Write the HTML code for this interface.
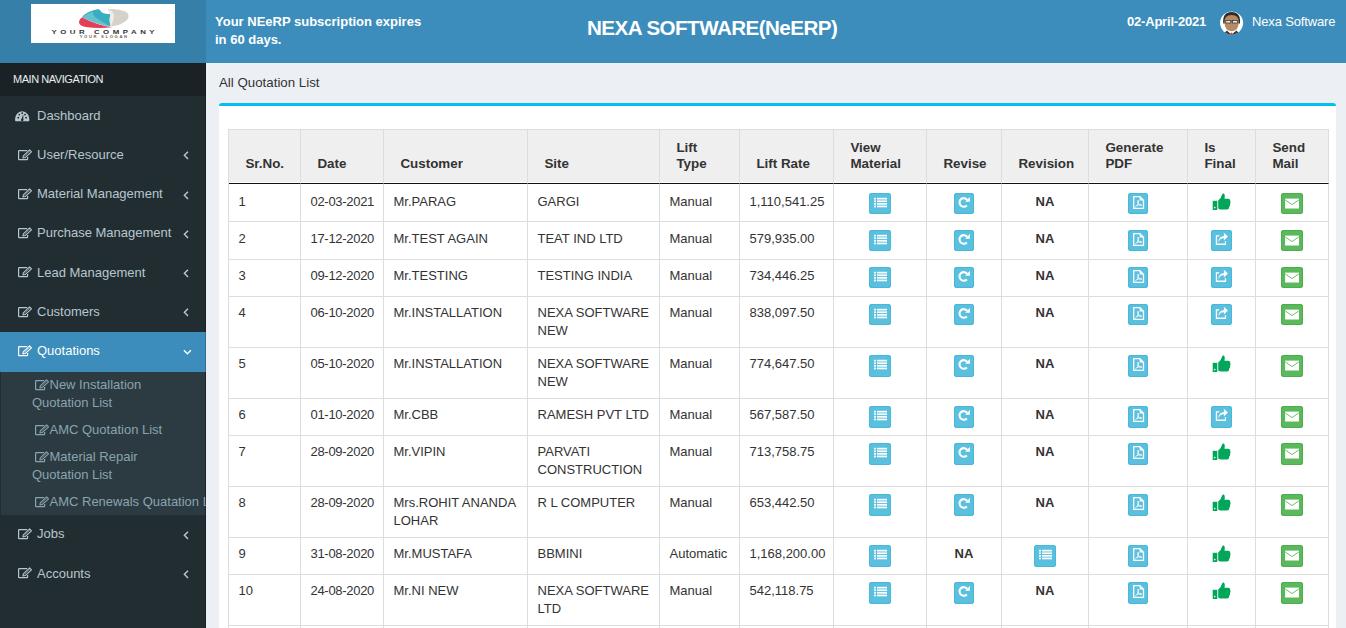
<!DOCTYPE html>
<html><head><meta charset="utf-8">
<style>
*{box-sizing:border-box;margin:0;padding:0}
html,body{width:1346px;height:628px;overflow:hidden;background:#ecf0f5;font-family:"Liberation Sans",sans-serif;font-size:13px;color:#333}
.hdr{position:absolute;left:0;top:0;width:1346px;height:63px;background:#3c8dbc}
.logo{position:absolute;left:0;top:0;width:206px;height:63px;background:#367fa9}
.logobox{position:absolute;left:31px;top:4px;width:144px;height:39px;background:#fff}
.sub{position:absolute;left:215px;top:12.6px;color:#fff;font-weight:bold;font-size:13px;line-height:18.2px}
.title{position:absolute;left:587px;top:15.5px;color:#fff;font-weight:bold;font-size:20.6px;line-height:24px;letter-spacing:-0.55px}
.date{position:absolute;left:1127px;top:12.6px;color:#fff;font-weight:bold;font-size:13px;line-height:18px;letter-spacing:-0.2px}
.uname{position:absolute;left:1252px;top:12.6px;color:#fff;font-size:13px;line-height:18px;letter-spacing:-0.15px}
.avatar{position:absolute;left:1216px;top:8px;width:32px;height:30px}
.side{position:absolute;left:0;top:63px;width:206px;height:565px;background:#222d32;overflow:hidden}
.side:after{content:"";position:absolute;right:0;top:0;width:1px;height:100%;background:rgba(0,0,0,0.2)}
.mnav{height:33px;background:#1a2226;color:#e8eef0;font-size:11px;letter-spacing:-0.45px;padding:9.2px 0 0 13px;line-height:15px}
.mi{position:relative;height:39.3px;color:#b8c7ce;font-size:13px;line-height:18px;padding-top:10.5px;padding-left:37px}
.mi svg.ic{position:absolute;left:16.5px;top:13.3px}
.ics{display:inline-block;vertical-align:-2.5px;margin-left:2px;margin-right:-0.5px}
.mi .chev{position:absolute;left:182.6px;top:15px}
.mi.act{background:#3c8dbc;color:#fff;height:40px}
.tree{background:#2c3b41;padding:4.5px 0 0 0;height:143px;margin:0 1px}
.tree .ti{padding-left:31px}
.ti{color:#8aa4af;font-size:13px;line-height:18px;padding:0 0 9px 32px;white-space:nowrap}
.content{position:absolute;left:206px;top:63px;width:1140px;height:565px}
.ctitle{position:absolute;left:13px;top:10.5px;font-size:13.3px;line-height:18px;color:#333}
.box{position:absolute;left:13px;top:40px;width:1117px;height:600px;background:#fff;border-top:3px solid #00c0ef;border-radius:3px}
table{position:absolute;left:9px;top:23px;border-collapse:separate;border-spacing:0;table-layout:fixed;border-left:1px solid #ddd;border-top:1px solid #ddd}
td,th{border-right:1px solid #ddd;border-bottom:1px solid #ddd;font-size:13px;line-height:18px;vertical-align:top;text-align:left;font-weight:normal;padding:0}
th{background:#efefef;font-weight:bold;font-size:13.4px;vertical-align:bottom;line-height:16.5px;padding:0 0 10.1px 16.4px;border-bottom:1px solid #111;box-shadow:inset 0 -1px 0 #fff;height:54px}
td{padding:6.5px 0 0 9.5px}
td.dt{letter-spacing:-0.3px}
td.c{text-align:center;padding-left:0;padding-top:7px}
td.na{font-weight:bold;padding-top:6.5px}
.r0 td{padding-top:8.5px}.r0 td.c{padding-top:9px}.r0 td.na{padding-top:8.5px}
.r1 td{padding-top:7.5px}.r1 td.c{padding-top:8px}.r1 td.na{padding-top:7.5px}
.btn{display:inline-block;width:22px;height:21px;border-radius:3px;vertical-align:top;position:relative}
.r4 .btn,.r5 .btn,.r6 .btn,.r7 .btn,.r8 .btn,.r9 .btn{height:22px}
.bi{background:#5bc0de;box-shadow:inset 0 0 0 1px #46b8da}
.bs{background:#5cb85c;box-shadow:inset 0 0 0 1px #4cae4c}
</style></head><body>
<div class="hdr"></div>
<div class="logo"><svg style="position:absolute;left:0;top:0" width="206" height="63" viewBox="0 0 206 63">
<rect x="31" y="4" width="144" height="39" fill="#fff"/>
<path d="M79 21.5 Q78.5 25.8 86 27 Q98 28.6 112.2 27.3 Q96 24.8 82 17.2 Q79.5 19 79 21.5 Z" fill="#e63e56"/>
<path d="M82 17.2 Q86 12 97 9.3 Q99.5 9 100 10 Q101 13 106 13.8 Q109.5 14.3 110.2 14 Q109 20 110.3 26.6 Q97 24.5 82 17.2 Z" fill="#38afc1"/>
<path d="M82.5 17.5 Q87 13.5 93 11.5 Q92 15.5 98 19 Q103 22.5 110.3 26.5 Q96 24.5 82.5 17.5 Z" fill="#8fd0da" opacity="0.55"/>
<path d="M107.5 9.2 Q118 8.2 125.5 11.5 Q131 15 127 20 Q121 25.5 110.3 26.6 Q109 20 110.2 14 Q110 11 107.5 9.2 Z" fill="#d5d2cc"/>
<path d="M108.5 9.5 Q113.5 11 114 15.5 Q113.8 21.5 110.6 26.4 Q109.2 20 110.2 14 Q110 11 108.5 9.5 Z" fill="#f1ede5"/>
<text transform="scale(1.4 1)" x="36.8" y="34.3" font-family="Liberation Sans" font-size="5.6" font-weight="bold" fill="#333" textLength="73.6" lengthAdjust="spacing">YOUR COMPANY</text>
<text transform="scale(1.4 1)" x="56.9" y="38.3" font-family="Liberation Sans" font-size="3" font-weight="bold" fill="#666" textLength="33.9" lengthAdjust="spacing">YOUR SLOGAN</text>
</svg></div>
<div class="sub">Your NEeRP subscription expires<br>in 60 days.</div>
<div class="title">NEXA SOFTWARE(NeERP)</div>
<div class="date">02-April-2021</div>
<div class="avatar"><svg width="32" height="30" viewBox="0 0 32 30">
<defs><clipPath id="avc"><circle cx="15.6" cy="15" r="11.5"/></clipPath></defs>
<circle cx="15.6" cy="15" r="11.5" fill="#fff"/>
<g clip-path="url(#avc)">
<path d="M6 27 L11 22.5 L15.6 26 L20.2 22.5 L25.5 27 V30 H6 Z" fill="#3b3b3b"/>
<path d="M11.6 23 L15.6 26.5 L19.6 23 Z" fill="#fff"/>
<path d="M15 24.8 H16.3 L16.8 27.5 H14.5 Z" fill="#e3191c"/>
</g>
<path d="M7.2 15.5 Q6.6 7.5 10.5 5.3 Q15.6 2.8 20.7 5.3 Q24.6 7.5 24 15.5 Z" fill="#2e2e2e"/>
<path d="M8.4 14 Q8.4 7.2 15.6 7 Q22.8 7.2 22.8 14 Q22.8 19 20.5 21.5 Q18 23.2 15.6 23.2 Q13.2 23.2 10.7 21.5 Q8.4 19 8.4 14 Z" fill="#b68b63"/>
<rect x="9.8" y="12.6" width="5" height="2.4" fill="#e6e6e6" stroke="#333" stroke-width="0.7"/>
<rect x="16.4" y="12.6" width="5" height="2.4" fill="#e6e6e6" stroke="#333" stroke-width="0.7"/>
<path d="M14.8 13.4 H16.4" stroke="#333" stroke-width="0.7"/>
</svg></div>
<div class="uname">Nexa Software</div>

<div class="side">
  <div class="mnav">MAIN NAVIGATION</div>
  <div class="mi"><svg class="ic" style="left:15px;top:14.5px" width="15" height="11" viewBox="0 0 15 11"><path d="M0.3 10.3 Q-0.6 6 1.8 3 Q4 0.3 7.2 0.3 Q10.4 0.3 12.6 3 Q15 6 14.1 10.3 Z" fill="currentColor"/><g fill="#222d32"><circle cx="3.3" cy="6.7" r="0.9"/><circle cx="4.4" cy="3.6" r="0.9"/><circle cx="7.2" cy="2.2" r="0.9"/><circle cx="10" cy="3.6" r="0.9"/><circle cx="11.1" cy="6.7" r="0.9"/><path d="M6.3 8.8 L8 3.8 L8.3 4 L8.3 9 Z"/><circle cx="7.2" cy="8.9" r="1.2"/></g></svg>Dashboard</div>
  <div class="mi"><svg class="ic" width="16" height="13" viewBox="0 0 16 13"><path d="M10.2 1.6 H2.2 Q1.6 1.6 1.6 2.2 V10 Q1.6 10.6 2.2 10.6 H10 Q10.6 10.6 10.6 10 V8" fill="none" stroke="currentColor" stroke-width="1.2"/><path d="M5.9 8.9 L6.3 6.8 L12.6 0.9 L14.5 2.8 L8.2 8.6 Z" fill="none" stroke="currentColor" stroke-width="1.05" stroke-linejoin="round"/><path d="M7.2 7.5 L13.3 1.9" stroke="currentColor" stroke-width="0.7" opacity="0.7"/></svg>User/Resource<svg class="chev" width="8" height="10" viewBox="0 0 8 10"><path d="M5.0 1.7 L1.4 5.3 L5.0 8.9" fill="none" stroke="currentColor" stroke-width="1.45"/></svg></div>
  <div class="mi"><svg class="ic" width="16" height="13" viewBox="0 0 16 13"><path d="M10.2 1.6 H2.2 Q1.6 1.6 1.6 2.2 V10 Q1.6 10.6 2.2 10.6 H10 Q10.6 10.6 10.6 10 V8" fill="none" stroke="currentColor" stroke-width="1.2"/><path d="M5.9 8.9 L6.3 6.8 L12.6 0.9 L14.5 2.8 L8.2 8.6 Z" fill="none" stroke="currentColor" stroke-width="1.05" stroke-linejoin="round"/><path d="M7.2 7.5 L13.3 1.9" stroke="currentColor" stroke-width="0.7" opacity="0.7"/></svg>Material Management<svg class="chev" width="8" height="10" viewBox="0 0 8 10"><path d="M5.0 1.7 L1.4 5.3 L5.0 8.9" fill="none" stroke="currentColor" stroke-width="1.45"/></svg></div>
  <div class="mi"><svg class="ic" width="16" height="13" viewBox="0 0 16 13"><path d="M10.2 1.6 H2.2 Q1.6 1.6 1.6 2.2 V10 Q1.6 10.6 2.2 10.6 H10 Q10.6 10.6 10.6 10 V8" fill="none" stroke="currentColor" stroke-width="1.2"/><path d="M5.9 8.9 L6.3 6.8 L12.6 0.9 L14.5 2.8 L8.2 8.6 Z" fill="none" stroke="currentColor" stroke-width="1.05" stroke-linejoin="round"/><path d="M7.2 7.5 L13.3 1.9" stroke="currentColor" stroke-width="0.7" opacity="0.7"/></svg>Purchase Management<svg class="chev" width="8" height="10" viewBox="0 0 8 10"><path d="M5.0 1.7 L1.4 5.3 L5.0 8.9" fill="none" stroke="currentColor" stroke-width="1.45"/></svg></div>
  <div class="mi"><svg class="ic" width="16" height="13" viewBox="0 0 16 13"><path d="M10.2 1.6 H2.2 Q1.6 1.6 1.6 2.2 V10 Q1.6 10.6 2.2 10.6 H10 Q10.6 10.6 10.6 10 V8" fill="none" stroke="currentColor" stroke-width="1.2"/><path d="M5.9 8.9 L6.3 6.8 L12.6 0.9 L14.5 2.8 L8.2 8.6 Z" fill="none" stroke="currentColor" stroke-width="1.05" stroke-linejoin="round"/><path d="M7.2 7.5 L13.3 1.9" stroke="currentColor" stroke-width="0.7" opacity="0.7"/></svg>Lead Management<svg class="chev" width="8" height="10" viewBox="0 0 8 10"><path d="M5.0 1.7 L1.4 5.3 L5.0 8.9" fill="none" stroke="currentColor" stroke-width="1.45"/></svg></div>
  <div class="mi"><svg class="ic" width="16" height="13" viewBox="0 0 16 13"><path d="M10.2 1.6 H2.2 Q1.6 1.6 1.6 2.2 V10 Q1.6 10.6 2.2 10.6 H10 Q10.6 10.6 10.6 10 V8" fill="none" stroke="currentColor" stroke-width="1.2"/><path d="M5.9 8.9 L6.3 6.8 L12.6 0.9 L14.5 2.8 L8.2 8.6 Z" fill="none" stroke="currentColor" stroke-width="1.05" stroke-linejoin="round"/><path d="M7.2 7.5 L13.3 1.9" stroke="currentColor" stroke-width="0.7" opacity="0.7"/></svg>Customers<svg class="chev" width="8" height="10" viewBox="0 0 8 10"><path d="M5.0 1.7 L1.4 5.3 L5.0 8.9" fill="none" stroke="currentColor" stroke-width="1.45"/></svg></div>
  <div class="mi act"><svg class="ic" width="16" height="13" viewBox="0 0 16 13"><path d="M10.2 1.6 H2.2 Q1.6 1.6 1.6 2.2 V10 Q1.6 10.6 2.2 10.6 H10 Q10.6 10.6 10.6 10 V8" fill="none" stroke="currentColor" stroke-width="1.2"/><path d="M5.9 8.9 L6.3 6.8 L12.6 0.9 L14.5 2.8 L8.2 8.6 Z" fill="none" stroke="currentColor" stroke-width="1.05" stroke-linejoin="round"/><path d="M7.2 7.5 L13.3 1.9" stroke="currentColor" stroke-width="0.7" opacity="0.7"/></svg>Quotations<svg class="chev" style="left:181.5px;top:16px" width="11" height="8" viewBox="0 0 11 8"><path d="M1.9 2.3 L5.4 5.8 L8.9 2.3" fill="none" stroke="currentColor" stroke-width="1.45"/></svg></div>
  <div class="tree">
    <div class="ti"><svg class="ics" width="16" height="13" viewBox="0 0 16 13"><path d="M10.2 1.6 H2.2 Q1.6 1.6 1.6 2.2 V10 Q1.6 10.6 2.2 10.6 H10 Q10.6 10.6 10.6 10 V8" fill="none" stroke="currentColor" stroke-width="1.2"/><path d="M5.9 8.9 L6.3 6.8 L12.6 0.9 L14.5 2.8 L8.2 8.6 Z" fill="none" stroke="currentColor" stroke-width="1.05" stroke-linejoin="round"/><path d="M7.2 7.5 L13.3 1.9" stroke="currentColor" stroke-width="0.7" opacity="0.7"/></svg>New Installation<br>Quotation List</div>
    <div class="ti"><svg class="ics" width="16" height="13" viewBox="0 0 16 13"><path d="M10.2 1.6 H2.2 Q1.6 1.6 1.6 2.2 V10 Q1.6 10.6 2.2 10.6 H10 Q10.6 10.6 10.6 10 V8" fill="none" stroke="currentColor" stroke-width="1.2"/><path d="M5.9 8.9 L6.3 6.8 L12.6 0.9 L14.5 2.8 L8.2 8.6 Z" fill="none" stroke="currentColor" stroke-width="1.05" stroke-linejoin="round"/><path d="M7.2 7.5 L13.3 1.9" stroke="currentColor" stroke-width="0.7" opacity="0.7"/></svg>AMC Quotation List</div>
    <div class="ti"><svg class="ics" width="16" height="13" viewBox="0 0 16 13"><path d="M10.2 1.6 H2.2 Q1.6 1.6 1.6 2.2 V10 Q1.6 10.6 2.2 10.6 H10 Q10.6 10.6 10.6 10 V8" fill="none" stroke="currentColor" stroke-width="1.2"/><path d="M5.9 8.9 L6.3 6.8 L12.6 0.9 L14.5 2.8 L8.2 8.6 Z" fill="none" stroke="currentColor" stroke-width="1.05" stroke-linejoin="round"/><path d="M7.2 7.5 L13.3 1.9" stroke="currentColor" stroke-width="0.7" opacity="0.7"/></svg>Material Repair<br>Quotation List</div>
    <div class="ti"><svg class="ics" width="16" height="13" viewBox="0 0 16 13"><path d="M10.2 1.6 H2.2 Q1.6 1.6 1.6 2.2 V10 Q1.6 10.6 2.2 10.6 H10 Q10.6 10.6 10.6 10 V8" fill="none" stroke="currentColor" stroke-width="1.2"/><path d="M5.9 8.9 L6.3 6.8 L12.6 0.9 L14.5 2.8 L8.2 8.6 Z" fill="none" stroke="currentColor" stroke-width="1.05" stroke-linejoin="round"/><path d="M7.2 7.5 L13.3 1.9" stroke="currentColor" stroke-width="0.7" opacity="0.7"/></svg>AMC Renewals Quatation List</div>
  </div>
  <div class="mi"><svg class="ic" width="16" height="13" viewBox="0 0 16 13"><path d="M10.2 1.6 H2.2 Q1.6 1.6 1.6 2.2 V10 Q1.6 10.6 2.2 10.6 H10 Q10.6 10.6 10.6 10 V8" fill="none" stroke="currentColor" stroke-width="1.2"/><path d="M5.9 8.9 L6.3 6.8 L12.6 0.9 L14.5 2.8 L8.2 8.6 Z" fill="none" stroke="currentColor" stroke-width="1.05" stroke-linejoin="round"/><path d="M7.2 7.5 L13.3 1.9" stroke="currentColor" stroke-width="0.7" opacity="0.7"/></svg>Jobs<svg class="chev" width="8" height="10" viewBox="0 0 8 10"><path d="M5.0 1.7 L1.4 5.3 L5.0 8.9" fill="none" stroke="currentColor" stroke-width="1.45"/></svg></div>
  <div class="mi"><svg class="ic" width="16" height="13" viewBox="0 0 16 13"><path d="M10.2 1.6 H2.2 Q1.6 1.6 1.6 2.2 V10 Q1.6 10.6 2.2 10.6 H10 Q10.6 10.6 10.6 10 V8" fill="none" stroke="currentColor" stroke-width="1.2"/><path d="M5.9 8.9 L6.3 6.8 L12.6 0.9 L14.5 2.8 L8.2 8.6 Z" fill="none" stroke="currentColor" stroke-width="1.05" stroke-linejoin="round"/><path d="M7.2 7.5 L13.3 1.9" stroke="currentColor" stroke-width="0.7" opacity="0.7"/></svg>Accounts<svg class="chev" width="8" height="10" viewBox="0 0 8 10"><path d="M5.0 1.7 L1.4 5.3 L5.0 8.9" fill="none" stroke="currentColor" stroke-width="1.45"/></svg></div>
</div>

<div class="content">
  <div class="ctitle">All Quotation List</div>
  <div class="box">
<!--TBL--><table><colgroup><col style="width:72px"><col style="width:83px"><col style="width:144px"><col style="width:132px"><col style="width:80px"><col style="width:94px"><col style="width:93px"><col style="width:75px"><col style="width:87px"><col style="width:99px"><col style="width:68px"><col style="width:73px"></colgroup>
<tr class="hr"><th>Sr.No.</th><th>Date</th><th>Customer</th><th>Site</th><th>Lift<br>Type</th><th>Lift Rate</th><th>View<br>Material</th><th>Revise</th><th>Revision</th><th>Generate<br>PDF</th><th>Is<br>Final</th><th>Send<br>Mail</th></tr>
<tr class="r0" style="height:38px"><td>1</td><td class="dt">02-03-2021</td><td>Mr.PARAG</td><td>GARGI</td><td>Manual</td><td>1,110,541.25</td><td class="c"><span class="btn bi" style="width:22px"><svg width="22" height="21" viewBox="0 0 22 21"><g fill="#fff"><rect x="5" y="4.8" width="2" height="1.7"/><rect x="8" y="4.8" width="10" height="1.7"/><rect x="5" y="7.4" width="2" height="1.7"/><rect x="8" y="7.4" width="10" height="1.7"/><rect x="5" y="10" width="2" height="1.7"/><rect x="8" y="10" width="10" height="1.7"/><rect x="5" y="12.6" width="2" height="1.7"/><rect x="8" y="12.6" width="10" height="1.7"/></g></svg></span></td><td class="c"><span class="btn bi" style="width:20px"><svg width="20" height="21" viewBox="0 0 20 21"><path d="M13.19 6.80 A4.3 4.3 0 1 0 12.84 12.49" fill="none" stroke="#fff" stroke-width="2.1"/><path d="M15.9 3.9 V8.7 H11.1 Z" fill="#fff"/></svg></span></td><td class="c na">NA</td><td class="c"><span class="btn bi" style="width:20px"><svg width="20" height="21" viewBox="0 0 20 21"><path d="M5.7 3.7 H11.9 L15.5 7.3 V15.4 H5.7 Z" fill="none" stroke="#fff" stroke-width="1.3"/><path d="M11.6 3.6 L15.6 7.6 H11.6 Z" fill="#fff"/><path d="M7.2 14.2 Q8.3 13.8 9.6 11.4 Q10.5 9.5 10.3 7.6 Q10.2 6.8 9.9 7.5 Q9.6 9.2 10.7 11 Q11.5 12.2 13.8 12.6 M9 12.4 Q11 11.7 13.5 11.6" fill="none" stroke="#fff" stroke-width="0.85"/></svg></span></td><td class="c"><svg width="20" height="18" viewBox="0 0 20 18" style="vertical-align:top"><path d="M0.7 7.8 H5.3 V17 H0.7 Z" fill="#00a65a"/><circle cx="2.8" cy="14.6" r="0.8" fill="#fff"/><path d="M6.2 7.6 Q9.3 5.2 10.1 1.6 Q10.6 0.2 11.8 0.6 Q13.3 1.4 12.5 5.8 H16.5 Q18.6 6.1 18.3 8.2 Q19 9.8 18 11.1 Q18.6 12.8 17.2 13.8 Q17.5 15.8 15.5 16.6 H9 Q7.3 16.6 6.2 15.6 Z" fill="#00a65a"/></svg></td><td class="c"><span class="btn bs" style="width:22px"><svg width="22" height="21" viewBox="0 0 22 21"><rect x="4.1" y="5.6" width="13.9" height="9.9" fill="#fff"/><path d="M4.3 6.9 L11 11.6 L17.8 6.9" fill="none" stroke="#5cb85c" stroke-width="0.9"/></svg></span></td></tr>
<tr class="r1" style="height:38px"><td>2</td><td class="dt">17-12-2020</td><td>Mr.TEST AGAIN</td><td>TEAT IND LTD</td><td>Manual</td><td>579,935.00</td><td class="c"><span class="btn bi" style="width:22px"><svg width="22" height="21" viewBox="0 0 22 21"><g fill="#fff"><rect x="5" y="4.8" width="2" height="1.7"/><rect x="8" y="4.8" width="10" height="1.7"/><rect x="5" y="7.4" width="2" height="1.7"/><rect x="8" y="7.4" width="10" height="1.7"/><rect x="5" y="10" width="2" height="1.7"/><rect x="8" y="10" width="10" height="1.7"/><rect x="5" y="12.6" width="2" height="1.7"/><rect x="8" y="12.6" width="10" height="1.7"/></g></svg></span></td><td class="c"><span class="btn bi" style="width:20px"><svg width="20" height="21" viewBox="0 0 20 21"><path d="M13.19 6.80 A4.3 4.3 0 1 0 12.84 12.49" fill="none" stroke="#fff" stroke-width="2.1"/><path d="M15.9 3.9 V8.7 H11.1 Z" fill="#fff"/></svg></span></td><td class="c na">NA</td><td class="c"><span class="btn bi" style="width:20px"><svg width="20" height="21" viewBox="0 0 20 21"><path d="M5.7 3.7 H11.9 L15.5 7.3 V15.4 H5.7 Z" fill="none" stroke="#fff" stroke-width="1.3"/><path d="M11.6 3.6 L15.6 7.6 H11.6 Z" fill="#fff"/><path d="M7.2 14.2 Q8.3 13.8 9.6 11.4 Q10.5 9.5 10.3 7.6 Q10.2 6.8 9.9 7.5 Q9.6 9.2 10.7 11 Q11.5 12.2 13.8 12.6 M9 12.4 Q11 11.7 13.5 11.6" fill="none" stroke="#fff" stroke-width="0.85"/></svg></span></td><td class="c"><span class="btn bi" style="width:21px"><svg width="21" height="21" viewBox="0 0 21 21"><path d="M8.3 5.95 H5.45 V14.25 H14.45 V11.2" fill="none" stroke="#fff" stroke-width="1.3"/><path d="M7.6 12.8 Q7.2 9.5 9.2 7.6 Q10.6 6.3 12.9 6.3 V2.8 L16.9 6.6 L12.9 10.4 V8.3 Q10.8 8.2 9.6 9.1 Q8.2 10.2 7.6 12.8 Z" fill="#fff"/></svg></span></td><td class="c"><span class="btn bs" style="width:22px"><svg width="22" height="21" viewBox="0 0 22 21"><rect x="4.1" y="5.6" width="13.9" height="9.9" fill="#fff"/><path d="M4.3 6.9 L11 11.6 L17.8 6.9" fill="none" stroke="#5cb85c" stroke-width="0.9"/></svg></span></td></tr>
<tr class="r2" style="height:37px"><td>3</td><td class="dt">09-12-2020</td><td>Mr.TESTING</td><td>TESTING INDIA</td><td>Manual</td><td>734,446.25</td><td class="c"><span class="btn bi" style="width:22px"><svg width="22" height="21" viewBox="0 0 22 21"><g fill="#fff"><rect x="5" y="4.8" width="2" height="1.7"/><rect x="8" y="4.8" width="10" height="1.7"/><rect x="5" y="7.4" width="2" height="1.7"/><rect x="8" y="7.4" width="10" height="1.7"/><rect x="5" y="10" width="2" height="1.7"/><rect x="8" y="10" width="10" height="1.7"/><rect x="5" y="12.6" width="2" height="1.7"/><rect x="8" y="12.6" width="10" height="1.7"/></g></svg></span></td><td class="c"><span class="btn bi" style="width:20px"><svg width="20" height="21" viewBox="0 0 20 21"><path d="M13.19 6.80 A4.3 4.3 0 1 0 12.84 12.49" fill="none" stroke="#fff" stroke-width="2.1"/><path d="M15.9 3.9 V8.7 H11.1 Z" fill="#fff"/></svg></span></td><td class="c na">NA</td><td class="c"><span class="btn bi" style="width:20px"><svg width="20" height="21" viewBox="0 0 20 21"><path d="M5.7 3.7 H11.9 L15.5 7.3 V15.4 H5.7 Z" fill="none" stroke="#fff" stroke-width="1.3"/><path d="M11.6 3.6 L15.6 7.6 H11.6 Z" fill="#fff"/><path d="M7.2 14.2 Q8.3 13.8 9.6 11.4 Q10.5 9.5 10.3 7.6 Q10.2 6.8 9.9 7.5 Q9.6 9.2 10.7 11 Q11.5 12.2 13.8 12.6 M9 12.4 Q11 11.7 13.5 11.6" fill="none" stroke="#fff" stroke-width="0.85"/></svg></span></td><td class="c"><span class="btn bi" style="width:21px"><svg width="21" height="21" viewBox="0 0 21 21"><path d="M8.3 5.95 H5.45 V14.25 H14.45 V11.2" fill="none" stroke="#fff" stroke-width="1.3"/><path d="M7.6 12.8 Q7.2 9.5 9.2 7.6 Q10.6 6.3 12.9 6.3 V2.8 L16.9 6.6 L12.9 10.4 V8.3 Q10.8 8.2 9.6 9.1 Q8.2 10.2 7.6 12.8 Z" fill="#fff"/></svg></span></td><td class="c"><span class="btn bs" style="width:22px"><svg width="22" height="21" viewBox="0 0 22 21"><rect x="4.1" y="5.6" width="13.9" height="9.9" fill="#fff"/><path d="M4.3 6.9 L11 11.6 L17.8 6.9" fill="none" stroke="#5cb85c" stroke-width="0.9"/></svg></span></td></tr>
<tr class="r3" style="height:51px"><td>4</td><td class="dt">06-10-2020</td><td>Mr.INSTALLATION</td><td>NEXA SOFTWARE<br>NEW</td><td>Manual</td><td>838,097.50</td><td class="c"><span class="btn bi" style="width:22px"><svg width="22" height="21" viewBox="0 0 22 21"><g fill="#fff"><rect x="5" y="4.8" width="2" height="1.7"/><rect x="8" y="4.8" width="10" height="1.7"/><rect x="5" y="7.4" width="2" height="1.7"/><rect x="8" y="7.4" width="10" height="1.7"/><rect x="5" y="10" width="2" height="1.7"/><rect x="8" y="10" width="10" height="1.7"/><rect x="5" y="12.6" width="2" height="1.7"/><rect x="8" y="12.6" width="10" height="1.7"/></g></svg></span></td><td class="c"><span class="btn bi" style="width:20px"><svg width="20" height="21" viewBox="0 0 20 21"><path d="M13.19 6.80 A4.3 4.3 0 1 0 12.84 12.49" fill="none" stroke="#fff" stroke-width="2.1"/><path d="M15.9 3.9 V8.7 H11.1 Z" fill="#fff"/></svg></span></td><td class="c na">NA</td><td class="c"><span class="btn bi" style="width:20px"><svg width="20" height="21" viewBox="0 0 20 21"><path d="M5.7 3.7 H11.9 L15.5 7.3 V15.4 H5.7 Z" fill="none" stroke="#fff" stroke-width="1.3"/><path d="M11.6 3.6 L15.6 7.6 H11.6 Z" fill="#fff"/><path d="M7.2 14.2 Q8.3 13.8 9.6 11.4 Q10.5 9.5 10.3 7.6 Q10.2 6.8 9.9 7.5 Q9.6 9.2 10.7 11 Q11.5 12.2 13.8 12.6 M9 12.4 Q11 11.7 13.5 11.6" fill="none" stroke="#fff" stroke-width="0.85"/></svg></span></td><td class="c"><span class="btn bi" style="width:21px"><svg width="21" height="21" viewBox="0 0 21 21"><path d="M8.3 5.95 H5.45 V14.25 H14.45 V11.2" fill="none" stroke="#fff" stroke-width="1.3"/><path d="M7.6 12.8 Q7.2 9.5 9.2 7.6 Q10.6 6.3 12.9 6.3 V2.8 L16.9 6.6 L12.9 10.4 V8.3 Q10.8 8.2 9.6 9.1 Q8.2 10.2 7.6 12.8 Z" fill="#fff"/></svg></span></td><td class="c"><span class="btn bs" style="width:22px"><svg width="22" height="21" viewBox="0 0 22 21"><rect x="4.1" y="5.6" width="13.9" height="9.9" fill="#fff"/><path d="M4.3 6.9 L11 11.6 L17.8 6.9" fill="none" stroke="#5cb85c" stroke-width="0.9"/></svg></span></td></tr>
<tr class="r4" style="height:51px"><td>5</td><td class="dt">05-10-2020</td><td>Mr.INSTALLATION</td><td>NEXA SOFTWARE<br>NEW</td><td>Manual</td><td>774,647.50</td><td class="c"><span class="btn bi" style="width:22px"><svg width="22" height="21" viewBox="0 0 22 21"><g fill="#fff"><rect x="5" y="4.8" width="2" height="1.7"/><rect x="8" y="4.8" width="10" height="1.7"/><rect x="5" y="7.4" width="2" height="1.7"/><rect x="8" y="7.4" width="10" height="1.7"/><rect x="5" y="10" width="2" height="1.7"/><rect x="8" y="10" width="10" height="1.7"/><rect x="5" y="12.6" width="2" height="1.7"/><rect x="8" y="12.6" width="10" height="1.7"/></g></svg></span></td><td class="c"><span class="btn bi" style="width:20px"><svg width="20" height="21" viewBox="0 0 20 21"><path d="M13.19 6.80 A4.3 4.3 0 1 0 12.84 12.49" fill="none" stroke="#fff" stroke-width="2.1"/><path d="M15.9 3.9 V8.7 H11.1 Z" fill="#fff"/></svg></span></td><td class="c na">NA</td><td class="c"><span class="btn bi" style="width:20px"><svg width="20" height="21" viewBox="0 0 20 21"><path d="M5.7 3.7 H11.9 L15.5 7.3 V15.4 H5.7 Z" fill="none" stroke="#fff" stroke-width="1.3"/><path d="M11.6 3.6 L15.6 7.6 H11.6 Z" fill="#fff"/><path d="M7.2 14.2 Q8.3 13.8 9.6 11.4 Q10.5 9.5 10.3 7.6 Q10.2 6.8 9.9 7.5 Q9.6 9.2 10.7 11 Q11.5 12.2 13.8 12.6 M9 12.4 Q11 11.7 13.5 11.6" fill="none" stroke="#fff" stroke-width="0.85"/></svg></span></td><td class="c"><svg width="20" height="18" viewBox="0 0 20 18" style="vertical-align:top"><path d="M0.7 7.8 H5.3 V17 H0.7 Z" fill="#00a65a"/><circle cx="2.8" cy="14.6" r="0.8" fill="#fff"/><path d="M6.2 7.6 Q9.3 5.2 10.1 1.6 Q10.6 0.2 11.8 0.6 Q13.3 1.4 12.5 5.8 H16.5 Q18.6 6.1 18.3 8.2 Q19 9.8 18 11.1 Q18.6 12.8 17.2 13.8 Q17.5 15.8 15.5 16.6 H9 Q7.3 16.6 6.2 15.6 Z" fill="#00a65a"/></svg></td><td class="c"><span class="btn bs" style="width:22px"><svg width="22" height="21" viewBox="0 0 22 21"><rect x="4.1" y="5.6" width="13.9" height="9.9" fill="#fff"/><path d="M4.3 6.9 L11 11.6 L17.8 6.9" fill="none" stroke="#5cb85c" stroke-width="0.9"/></svg></span></td></tr>
<tr class="r5" style="height:37px"><td>6</td><td class="dt">01-10-2020</td><td>Mr.CBB</td><td>RAMESH PVT LTD</td><td>Manual</td><td>567,587.50</td><td class="c"><span class="btn bi" style="width:22px"><svg width="22" height="21" viewBox="0 0 22 21"><g fill="#fff"><rect x="5" y="4.8" width="2" height="1.7"/><rect x="8" y="4.8" width="10" height="1.7"/><rect x="5" y="7.4" width="2" height="1.7"/><rect x="8" y="7.4" width="10" height="1.7"/><rect x="5" y="10" width="2" height="1.7"/><rect x="8" y="10" width="10" height="1.7"/><rect x="5" y="12.6" width="2" height="1.7"/><rect x="8" y="12.6" width="10" height="1.7"/></g></svg></span></td><td class="c"><span class="btn bi" style="width:20px"><svg width="20" height="21" viewBox="0 0 20 21"><path d="M13.19 6.80 A4.3 4.3 0 1 0 12.84 12.49" fill="none" stroke="#fff" stroke-width="2.1"/><path d="M15.9 3.9 V8.7 H11.1 Z" fill="#fff"/></svg></span></td><td class="c na">NA</td><td class="c"><span class="btn bi" style="width:20px"><svg width="20" height="21" viewBox="0 0 20 21"><path d="M5.7 3.7 H11.9 L15.5 7.3 V15.4 H5.7 Z" fill="none" stroke="#fff" stroke-width="1.3"/><path d="M11.6 3.6 L15.6 7.6 H11.6 Z" fill="#fff"/><path d="M7.2 14.2 Q8.3 13.8 9.6 11.4 Q10.5 9.5 10.3 7.6 Q10.2 6.8 9.9 7.5 Q9.6 9.2 10.7 11 Q11.5 12.2 13.8 12.6 M9 12.4 Q11 11.7 13.5 11.6" fill="none" stroke="#fff" stroke-width="0.85"/></svg></span></td><td class="c"><span class="btn bi" style="width:21px"><svg width="21" height="21" viewBox="0 0 21 21"><path d="M8.3 5.95 H5.45 V14.25 H14.45 V11.2" fill="none" stroke="#fff" stroke-width="1.3"/><path d="M7.6 12.8 Q7.2 9.5 9.2 7.6 Q10.6 6.3 12.9 6.3 V2.8 L16.9 6.6 L12.9 10.4 V8.3 Q10.8 8.2 9.6 9.1 Q8.2 10.2 7.6 12.8 Z" fill="#fff"/></svg></span></td><td class="c"><span class="btn bs" style="width:22px"><svg width="22" height="21" viewBox="0 0 22 21"><rect x="4.1" y="5.6" width="13.9" height="9.9" fill="#fff"/><path d="M4.3 6.9 L11 11.6 L17.8 6.9" fill="none" stroke="#5cb85c" stroke-width="0.9"/></svg></span></td></tr>
<tr class="r6" style="height:51px"><td>7</td><td class="dt">28-09-2020</td><td>Mr.VIPIN</td><td>PARVATI<br>CONSTRUCTION</td><td>Manual</td><td>713,758.75</td><td class="c"><span class="btn bi" style="width:22px"><svg width="22" height="21" viewBox="0 0 22 21"><g fill="#fff"><rect x="5" y="4.8" width="2" height="1.7"/><rect x="8" y="4.8" width="10" height="1.7"/><rect x="5" y="7.4" width="2" height="1.7"/><rect x="8" y="7.4" width="10" height="1.7"/><rect x="5" y="10" width="2" height="1.7"/><rect x="8" y="10" width="10" height="1.7"/><rect x="5" y="12.6" width="2" height="1.7"/><rect x="8" y="12.6" width="10" height="1.7"/></g></svg></span></td><td class="c"><span class="btn bi" style="width:20px"><svg width="20" height="21" viewBox="0 0 20 21"><path d="M13.19 6.80 A4.3 4.3 0 1 0 12.84 12.49" fill="none" stroke="#fff" stroke-width="2.1"/><path d="M15.9 3.9 V8.7 H11.1 Z" fill="#fff"/></svg></span></td><td class="c na">NA</td><td class="c"><span class="btn bi" style="width:20px"><svg width="20" height="21" viewBox="0 0 20 21"><path d="M5.7 3.7 H11.9 L15.5 7.3 V15.4 H5.7 Z" fill="none" stroke="#fff" stroke-width="1.3"/><path d="M11.6 3.6 L15.6 7.6 H11.6 Z" fill="#fff"/><path d="M7.2 14.2 Q8.3 13.8 9.6 11.4 Q10.5 9.5 10.3 7.6 Q10.2 6.8 9.9 7.5 Q9.6 9.2 10.7 11 Q11.5 12.2 13.8 12.6 M9 12.4 Q11 11.7 13.5 11.6" fill="none" stroke="#fff" stroke-width="0.85"/></svg></span></td><td class="c"><svg width="20" height="18" viewBox="0 0 20 18" style="vertical-align:top"><path d="M0.7 7.8 H5.3 V17 H0.7 Z" fill="#00a65a"/><circle cx="2.8" cy="14.6" r="0.8" fill="#fff"/><path d="M6.2 7.6 Q9.3 5.2 10.1 1.6 Q10.6 0.2 11.8 0.6 Q13.3 1.4 12.5 5.8 H16.5 Q18.6 6.1 18.3 8.2 Q19 9.8 18 11.1 Q18.6 12.8 17.2 13.8 Q17.5 15.8 15.5 16.6 H9 Q7.3 16.6 6.2 15.6 Z" fill="#00a65a"/></svg></td><td class="c"><span class="btn bs" style="width:22px"><svg width="22" height="21" viewBox="0 0 22 21"><rect x="4.1" y="5.6" width="13.9" height="9.9" fill="#fff"/><path d="M4.3 6.9 L11 11.6 L17.8 6.9" fill="none" stroke="#5cb85c" stroke-width="0.9"/></svg></span></td></tr>
<tr class="r7" style="height:51px"><td>8</td><td class="dt">28-09-2020</td><td>Mrs.ROHIT ANANDA<br>LOHAR</td><td>R L COMPUTER</td><td>Manual</td><td>653,442.50</td><td class="c"><span class="btn bi" style="width:22px"><svg width="22" height="21" viewBox="0 0 22 21"><g fill="#fff"><rect x="5" y="4.8" width="2" height="1.7"/><rect x="8" y="4.8" width="10" height="1.7"/><rect x="5" y="7.4" width="2" height="1.7"/><rect x="8" y="7.4" width="10" height="1.7"/><rect x="5" y="10" width="2" height="1.7"/><rect x="8" y="10" width="10" height="1.7"/><rect x="5" y="12.6" width="2" height="1.7"/><rect x="8" y="12.6" width="10" height="1.7"/></g></svg></span></td><td class="c"><span class="btn bi" style="width:20px"><svg width="20" height="21" viewBox="0 0 20 21"><path d="M13.19 6.80 A4.3 4.3 0 1 0 12.84 12.49" fill="none" stroke="#fff" stroke-width="2.1"/><path d="M15.9 3.9 V8.7 H11.1 Z" fill="#fff"/></svg></span></td><td class="c na">NA</td><td class="c"><span class="btn bi" style="width:20px"><svg width="20" height="21" viewBox="0 0 20 21"><path d="M5.7 3.7 H11.9 L15.5 7.3 V15.4 H5.7 Z" fill="none" stroke="#fff" stroke-width="1.3"/><path d="M11.6 3.6 L15.6 7.6 H11.6 Z" fill="#fff"/><path d="M7.2 14.2 Q8.3 13.8 9.6 11.4 Q10.5 9.5 10.3 7.6 Q10.2 6.8 9.9 7.5 Q9.6 9.2 10.7 11 Q11.5 12.2 13.8 12.6 M9 12.4 Q11 11.7 13.5 11.6" fill="none" stroke="#fff" stroke-width="0.85"/></svg></span></td><td class="c"><svg width="20" height="18" viewBox="0 0 20 18" style="vertical-align:top"><path d="M0.7 7.8 H5.3 V17 H0.7 Z" fill="#00a65a"/><circle cx="2.8" cy="14.6" r="0.8" fill="#fff"/><path d="M6.2 7.6 Q9.3 5.2 10.1 1.6 Q10.6 0.2 11.8 0.6 Q13.3 1.4 12.5 5.8 H16.5 Q18.6 6.1 18.3 8.2 Q19 9.8 18 11.1 Q18.6 12.8 17.2 13.8 Q17.5 15.8 15.5 16.6 H9 Q7.3 16.6 6.2 15.6 Z" fill="#00a65a"/></svg></td><td class="c"><span class="btn bs" style="width:22px"><svg width="22" height="21" viewBox="0 0 22 21"><rect x="4.1" y="5.6" width="13.9" height="9.9" fill="#fff"/><path d="M4.3 6.9 L11 11.6 L17.8 6.9" fill="none" stroke="#5cb85c" stroke-width="0.9"/></svg></span></td></tr>
<tr class="r8" style="height:37px"><td>9</td><td class="dt">31-08-2020</td><td>Mr.MUSTAFA</td><td>BBMINI</td><td>Automatic</td><td>1,168,200.00</td><td class="c"><span class="btn bi" style="width:22px"><svg width="22" height="21" viewBox="0 0 22 21"><g fill="#fff"><rect x="5" y="4.8" width="2" height="1.7"/><rect x="8" y="4.8" width="10" height="1.7"/><rect x="5" y="7.4" width="2" height="1.7"/><rect x="8" y="7.4" width="10" height="1.7"/><rect x="5" y="10" width="2" height="1.7"/><rect x="8" y="10" width="10" height="1.7"/><rect x="5" y="12.6" width="2" height="1.7"/><rect x="8" y="12.6" width="10" height="1.7"/></g></svg></span></td><td class="c na">NA</td><td class="c"><span class="btn bi" style="width:22px"><svg width="22" height="21" viewBox="0 0 22 21"><g fill="#fff"><rect x="5" y="4.8" width="2" height="1.7"/><rect x="8" y="4.8" width="10" height="1.7"/><rect x="5" y="7.4" width="2" height="1.7"/><rect x="8" y="7.4" width="10" height="1.7"/><rect x="5" y="10" width="2" height="1.7"/><rect x="8" y="10" width="10" height="1.7"/><rect x="5" y="12.6" width="2" height="1.7"/><rect x="8" y="12.6" width="10" height="1.7"/></g></svg></span></td><td class="c"><span class="btn bi" style="width:20px"><svg width="20" height="21" viewBox="0 0 20 21"><path d="M5.7 3.7 H11.9 L15.5 7.3 V15.4 H5.7 Z" fill="none" stroke="#fff" stroke-width="1.3"/><path d="M11.6 3.6 L15.6 7.6 H11.6 Z" fill="#fff"/><path d="M7.2 14.2 Q8.3 13.8 9.6 11.4 Q10.5 9.5 10.3 7.6 Q10.2 6.8 9.9 7.5 Q9.6 9.2 10.7 11 Q11.5 12.2 13.8 12.6 M9 12.4 Q11 11.7 13.5 11.6" fill="none" stroke="#fff" stroke-width="0.85"/></svg></span></td><td class="c"><svg width="20" height="18" viewBox="0 0 20 18" style="vertical-align:top"><path d="M0.7 7.8 H5.3 V17 H0.7 Z" fill="#00a65a"/><circle cx="2.8" cy="14.6" r="0.8" fill="#fff"/><path d="M6.2 7.6 Q9.3 5.2 10.1 1.6 Q10.6 0.2 11.8 0.6 Q13.3 1.4 12.5 5.8 H16.5 Q18.6 6.1 18.3 8.2 Q19 9.8 18 11.1 Q18.6 12.8 17.2 13.8 Q17.5 15.8 15.5 16.6 H9 Q7.3 16.6 6.2 15.6 Z" fill="#00a65a"/></svg></td><td class="c"><span class="btn bs" style="width:22px"><svg width="22" height="21" viewBox="0 0 22 21"><rect x="4.1" y="5.6" width="13.9" height="9.9" fill="#fff"/><path d="M4.3 6.9 L11 11.6 L17.8 6.9" fill="none" stroke="#5cb85c" stroke-width="0.9"/></svg></span></td></tr>
<tr class="r9" style="height:51px"><td>10</td><td class="dt">24-08-2020</td><td>Mr.NI NEW</td><td>NEXA SOFTWARE<br>LTD</td><td>Manual</td><td>542,118.75</td><td class="c"><span class="btn bi" style="width:22px"><svg width="22" height="21" viewBox="0 0 22 21"><g fill="#fff"><rect x="5" y="4.8" width="2" height="1.7"/><rect x="8" y="4.8" width="10" height="1.7"/><rect x="5" y="7.4" width="2" height="1.7"/><rect x="8" y="7.4" width="10" height="1.7"/><rect x="5" y="10" width="2" height="1.7"/><rect x="8" y="10" width="10" height="1.7"/><rect x="5" y="12.6" width="2" height="1.7"/><rect x="8" y="12.6" width="10" height="1.7"/></g></svg></span></td><td class="c"><span class="btn bi" style="width:20px"><svg width="20" height="21" viewBox="0 0 20 21"><path d="M13.19 6.80 A4.3 4.3 0 1 0 12.84 12.49" fill="none" stroke="#fff" stroke-width="2.1"/><path d="M15.9 3.9 V8.7 H11.1 Z" fill="#fff"/></svg></span></td><td class="c na">NA</td><td class="c"><span class="btn bi" style="width:20px"><svg width="20" height="21" viewBox="0 0 20 21"><path d="M5.7 3.7 H11.9 L15.5 7.3 V15.4 H5.7 Z" fill="none" stroke="#fff" stroke-width="1.3"/><path d="M11.6 3.6 L15.6 7.6 H11.6 Z" fill="#fff"/><path d="M7.2 14.2 Q8.3 13.8 9.6 11.4 Q10.5 9.5 10.3 7.6 Q10.2 6.8 9.9 7.5 Q9.6 9.2 10.7 11 Q11.5 12.2 13.8 12.6 M9 12.4 Q11 11.7 13.5 11.6" fill="none" stroke="#fff" stroke-width="0.85"/></svg></span></td><td class="c"><svg width="20" height="18" viewBox="0 0 20 18" style="vertical-align:top"><path d="M0.7 7.8 H5.3 V17 H0.7 Z" fill="#00a65a"/><circle cx="2.8" cy="14.6" r="0.8" fill="#fff"/><path d="M6.2 7.6 Q9.3 5.2 10.1 1.6 Q10.6 0.2 11.8 0.6 Q13.3 1.4 12.5 5.8 H16.5 Q18.6 6.1 18.3 8.2 Q19 9.8 18 11.1 Q18.6 12.8 17.2 13.8 Q17.5 15.8 15.5 16.6 H9 Q7.3 16.6 6.2 15.6 Z" fill="#00a65a"/></svg></td><td class="c"><span class="btn bs" style="width:22px"><svg width="22" height="21" viewBox="0 0 22 21"><rect x="4.1" y="5.6" width="13.9" height="9.9" fill="#fff"/><path d="M4.3 6.9 L11 11.6 L17.8 6.9" fill="none" stroke="#5cb85c" stroke-width="0.9"/></svg></span></td></tr>
<tr class="r10" style="height:38px"><td>11</td><td class="dt">20-08-2020</td><td>Mr.TEST</td><td>TEST</td><td>Manual</td><td>500,000.00</td><td class="c"><span class="btn bi" style="width:22px"><svg width="22" height="21" viewBox="0 0 22 21"><g fill="#fff"><rect x="5" y="4.8" width="2" height="1.7"/><rect x="8" y="4.8" width="10" height="1.7"/><rect x="5" y="7.4" width="2" height="1.7"/><rect x="8" y="7.4" width="10" height="1.7"/><rect x="5" y="10" width="2" height="1.7"/><rect x="8" y="10" width="10" height="1.7"/><rect x="5" y="12.6" width="2" height="1.7"/><rect x="8" y="12.6" width="10" height="1.7"/></g></svg></span></td><td class="c"><span class="btn bi" style="width:20px"><svg width="20" height="21" viewBox="0 0 20 21"><path d="M13.19 6.80 A4.3 4.3 0 1 0 12.84 12.49" fill="none" stroke="#fff" stroke-width="2.1"/><path d="M15.9 3.9 V8.7 H11.1 Z" fill="#fff"/></svg></span></td><td class="c na">NA</td><td class="c"><span class="btn bi" style="width:20px"><svg width="20" height="21" viewBox="0 0 20 21"><path d="M5.7 3.7 H11.9 L15.5 7.3 V15.4 H5.7 Z" fill="none" stroke="#fff" stroke-width="1.3"/><path d="M11.6 3.6 L15.6 7.6 H11.6 Z" fill="#fff"/><path d="M7.2 14.2 Q8.3 13.8 9.6 11.4 Q10.5 9.5 10.3 7.6 Q10.2 6.8 9.9 7.5 Q9.6 9.2 10.7 11 Q11.5 12.2 13.8 12.6 M9 12.4 Q11 11.7 13.5 11.6" fill="none" stroke="#fff" stroke-width="0.85"/></svg></span></td><td class="c"><svg width="20" height="18" viewBox="0 0 20 18" style="vertical-align:top"><path d="M0.7 7.8 H5.3 V17 H0.7 Z" fill="#00a65a"/><circle cx="2.8" cy="14.6" r="0.8" fill="#fff"/><path d="M6.2 7.6 Q9.3 5.2 10.1 1.6 Q10.6 0.2 11.8 0.6 Q13.3 1.4 12.5 5.8 H16.5 Q18.6 6.1 18.3 8.2 Q19 9.8 18 11.1 Q18.6 12.8 17.2 13.8 Q17.5 15.8 15.5 16.6 H9 Q7.3 16.6 6.2 15.6 Z" fill="#00a65a"/></svg></td><td class="c"><span class="btn bs" style="width:22px"><svg width="22" height="21" viewBox="0 0 22 21"><rect x="4.1" y="5.6" width="13.9" height="9.9" fill="#fff"/><path d="M4.3 6.9 L11 11.6 L17.8 6.9" fill="none" stroke="#5cb85c" stroke-width="0.9"/></svg></span></td></tr>
</table><!--/TBL-->
  </div>
</div>
</body></html>
